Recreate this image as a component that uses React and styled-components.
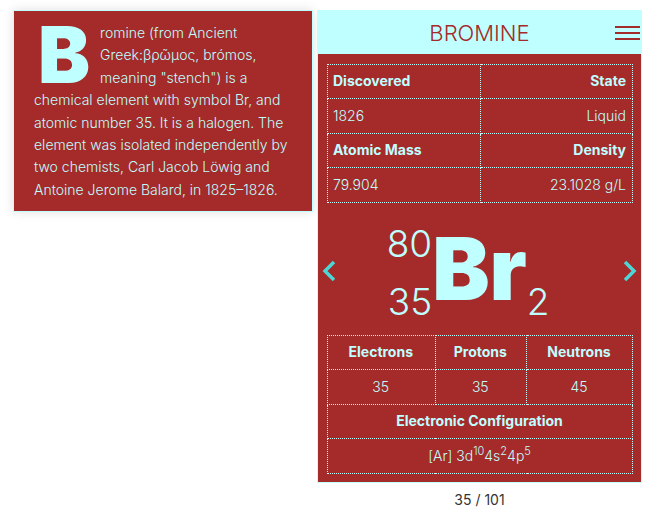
import React from "react";
import styled, { createGlobalStyle, ThemeProvider } from "styled-components";

const theme = {
  ink: "#a52a2a",
  pale: "#bfffff",
  accent: "#4ed5d5",
  sans: '"Inter", "Noto Sans", "Liberation Sans", sans-serif',
};

const GlobalStyle = createGlobalStyle`
  *, *::before, *::after { box-sizing: border-box; }
  body {
    margin: 0;
    background: #fff;
    color: #333;
    font: 300 14px/22px ${theme.sans};
  }
`;

const Page = styled.main`
  display: grid;
  grid-template-columns: 12fr 13fr;
  align-items: start;
  gap: 4px;
  padding: 10px 11px 0 13px;
`;

const Summary = styled.article`
  padding: 11px 20px 10px;
  border: 1px solid ${(p) => p.theme.pale};
  background: ${(p) => p.theme.ink};
  color: ${(p) => p.theme.pale};
  box-shadow: 0 0 10px rgba(0, 0, 0, 0.12);
`;

const SummaryText = styled.p`
  margin: 0;
  line-height: 1.6;

  &::first-letter {
    float: left;
    margin: 0 8px 0 0;
    padding: 0 2px 0 4px;
    font-size: 78px;
    line-height: 66px;
    font-weight: 900;
  }
`;

const Viewer = styled.section`
  min-width: 0;
`;

const Card = styled.article`
  border: 1px solid ${(p) => p.theme.pale};
  background: ${(p) => p.theme.ink};
  color: ${(p) => p.theme.pale};
`;

const Header = styled.header`
  display: grid;
  grid-template-columns: 1fr auto 1fr;
  align-items: center;
  height: 43px;
  background: ${(p) => p.theme.pale};
  color: ${(p) => p.theme.ink};
`;

const Title = styled.h1`
  grid-column: 2;
  margin: 0;
  font-size: 22px;
  line-height: 24px;
  font-weight: 300;
  text-transform: uppercase;
`;

const MenuButton = styled.button`
  display: grid;
  gap: 4px;
  justify-self: end;
  width: 25px;
  margin-right: 1px;
  padding: 0;
  border: 0;
  background: none;
  cursor: pointer;
`;

const MenuBar = styled.span`
  height: 2px;
  background: ${(p) => p.theme.ink};
`;

const Body = styled.div`
  padding: 10px 8px 8px 9px;
`;

const DataTable = styled.table`
  width: 100%;
  table-layout: ${(p) => (p.$even ? "fixed" : "auto")};
  border-collapse: collapse;
`;

const Cell = styled.td`
  height: ${(p) => (p.as === "th" ? 34 : 35)}px;
  padding: 0 6px ${(p) => (p.as === "th" ? 2 : 0)}px 5px;
  border: 1px dotted ${(p) => p.theme.pale};
  font-weight: ${(p) => (p.as === "th" ? 700 : 300)};
  text-align: ${(p) => p.$align || "center"};

  sup {
    font-size: 11px;
    line-height: 0;
  }
`;

const Stage = styled.div`
  display: flex;
  align-items: center;
  justify-content: space-between;
  height: 132px;
  margin: 0 -4px 0 -5px;
  padding-top: 4px;
`;

const Arrow = styled.button`
  display: flex;
  padding: 0;
  border: 0;
  background: none;
  color: ${(p) => p.theme.accent};
  cursor: pointer;
`;

const Nuclide = styled.div`
  display: flex;
  height: 120px;
`;

const Scripts = styled.div`
  display: flex;
  flex-direction: column;
  justify-content: ${(p) => (p.$low ? "flex-end" : "space-between")};
  width: 46px;
  padding-top: 4px;
  font-size: 37px;
  line-height: 58px;
  text-align: ${(p) => (p.$low ? "left" : "right")};
`;

const Symbol = styled.strong`
  font-size: 86px;
  line-height: 116px;
  font-weight: 900;
`;

const Counter = styled.p`
  margin: 6px 0 0;
  font-weight: 400;
  text-align: center;
`;

function Chevron({ points }) {
  return (
    <svg width="14" height="22" viewBox="0 0 14 22" fill="none" aria-hidden="true">
      <polyline points={points} stroke="currentColor" strokeWidth="3.5" />
    </svg>
  );
}

export default function App() {
  return (
    <ThemeProvider theme={theme}>
      <GlobalStyle />
      <Page>
        <Summary>
          <SummaryText>
            Bromine (from Ancient Greek:βρῶμος, brómos, meaning "stench") is a
            chemical element with symbol Br, and atomic number 35. It is a
            halogen. The element was isolated independently by two chemists,
            Carl Jacob Löwig and Antoine Jerome Balard, in 1825–1826.
          </SummaryText>
        </Summary>
        <Viewer>
          <Card>
            <Header>
              <Title>Bromine</Title>
              <MenuButton type="button" aria-label="Menu">
                <MenuBar />
                <MenuBar />
                <MenuBar />
              </MenuButton>
            </Header>
            <Body>
              <DataTable $even>
                <tbody>
                  <tr>
                    <Cell as="th" scope="col" $align="left">Discovered</Cell>
                    <Cell as="th" scope="col" $align="right">State</Cell>
                  </tr>
                  <tr>
                    <Cell $align="left">1826</Cell>
                    <Cell $align="right">Liquid</Cell>
                  </tr>
                  <tr>
                    <Cell as="th" scope="col" $align="left">Atomic Mass</Cell>
                    <Cell as="th" scope="col" $align="right">Density</Cell>
                  </tr>
                  <tr>
                    <Cell $align="left">79.904</Cell>
                    <Cell $align="right">23.1028 g/L</Cell>
                  </tr>
                </tbody>
              </DataTable>
              <Stage>
                <Arrow type="button" aria-label="Previous element">
                  <Chevron points="12,2 3,11 12,20" />
                </Arrow>
                <Nuclide>
                  <Scripts>
                    <span>80</span>
                    <span>35</span>
                  </Scripts>
                  <Symbol>Br</Symbol>
                  <Scripts $low>
                    <span>2</span>
                  </Scripts>
                </Nuclide>
                <Arrow type="button" aria-label="Next element">
                  <Chevron points="2,2 11,11 2,20" />
                </Arrow>
              </Stage>
              <DataTable>
                <tbody>
                  <tr>
                    <Cell as="th" scope="col">Electrons</Cell>
                    <Cell as="th" scope="col">Protons</Cell>
                    <Cell as="th" scope="col">Neutrons</Cell>
                  </tr>
                  <tr>
                    <Cell>35</Cell>
                    <Cell>35</Cell>
                    <Cell>45</Cell>
                  </tr>
                  <tr>
                    <Cell as="th" colSpan={3}>Electronic Configuration</Cell>
                  </tr>
                  <tr>
                    <Cell colSpan={3}>
                      [Ar] 3d<sup>10</sup>4s<sup>2</sup>4p<sup>5</sup>
                    </Cell>
                  </tr>
                </tbody>
              </DataTable>
            </Body>
          </Card>
          <Counter>35 / 101</Counter>
        </Viewer>
      </Page>
    </ThemeProvider>
  );
}
